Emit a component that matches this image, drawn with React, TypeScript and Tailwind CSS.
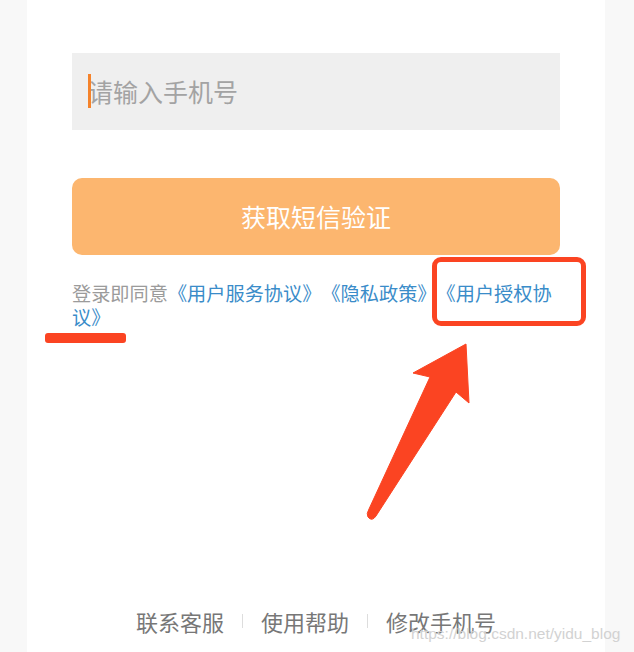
import React from "react";

const font = { fontFamily: '"Noto Sans CJK SC", "Noto Sans", sans-serif' };

export default function App() {
  return (
    <div className="relative flex h-[652px] w-[634px] overflow-hidden bg-[#f8f8f8] [text-spacing-trim:space-all]" style={font}>
      <div className="w-[27px] shrink-0 bg-[#f8f8f8]" />
      <div className="flex w-[578px] shrink-0 flex-col bg-white px-[45px] pt-[53px]">
        <div className="relative flex h-[77px] items-center bg-[#efefef] pl-[16px]">
          <div className="absolute left-[16px] top-[21px] h-[34px] w-[3px] bg-[#f5832b]" />
          <span className="text-[25px] leading-none text-[#a3a3a3]">请输入手机号</span>
        </div>
        <button className="mt-[48px] flex h-[77px] items-center justify-center rounded-[10px] bg-[#fcb66f] text-[25px] text-white">
          获取短信验证
        </button>
        <p className="mt-[26px] text-[19.2px] leading-[24px] text-[#9b9b9b]">
          登录即同意
          <span className="text-[#3a8cc9]">《用户服务协议》《隐私政策》《用户授权协议》</span>
        </p>
        <div className="mt-auto flex items-center justify-center pb-[19px] text-[22px] leading-[24px] text-[#777777]">
          <span>联系客服</span>
          <span className="mx-[18px] h-[14px] w-px bg-[#dddddd]" />
          <span>使用帮助</span>
          <span className="mx-[18px] h-[14px] w-px bg-[#dddddd]" />
          <span>修改手机号</span>
        </div>
      </div>
      <div className="flex-1 bg-[#f8f8f8]" />

      <div className="absolute left-[45px] top-[333px] h-[10px] w-[81px] rounded-[3px] bg-[#fb4422]" />
      <div className="absolute left-[432px] top-[257px] h-[69px] w-[154px] rounded-[9px] border-[5px] border-[#fb4422]" />
      <svg className="absolute left-0 top-0" width="634" height="652" viewBox="0 0 634 652">
        <path
          d="M466 344 L469 403 L456 392 L376 516 Q372 522 368 517 Q366 514 369 509 L430 377 L413 373 Z"
          fill="#fb4422"
          stroke="#fb4422"
          strokeWidth="1"
          strokeLinejoin="round"
        />
      </svg>
      <div
        className="absolute left-[411px] top-[625px] text-[15.5px] leading-[18px] text-[#d2d2d2]"
        style={{ fontFamily: '"Liberation Sans", Arial, sans-serif' }}
      >
        https://blog.csdn.net/yidu_blog
      </div>
    </div>
  );
}
